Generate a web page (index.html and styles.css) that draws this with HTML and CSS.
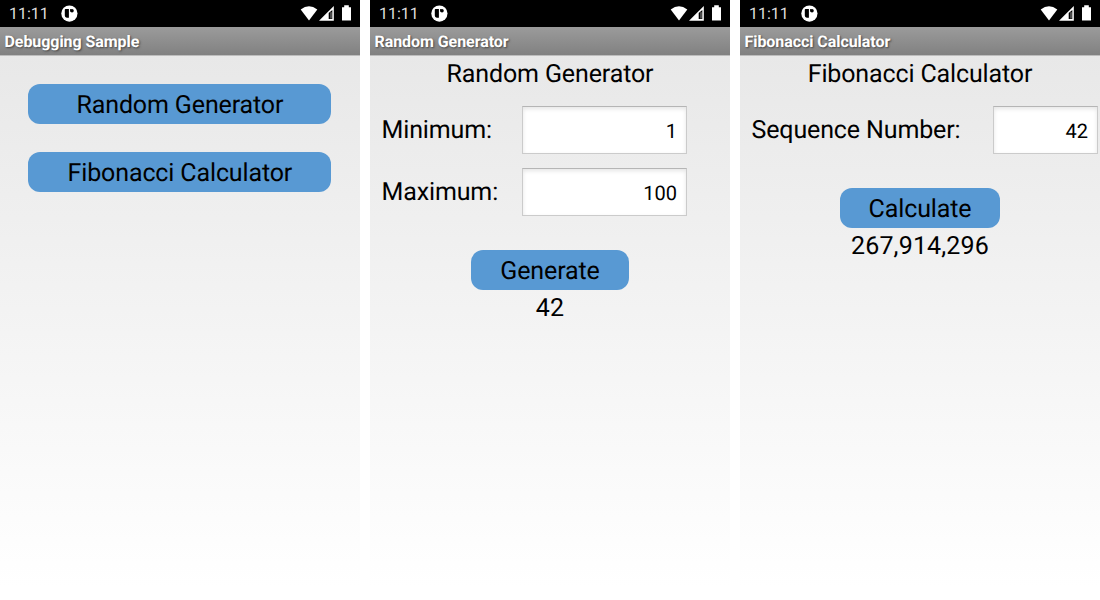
FILE: index.html
```html
<!DOCTYPE html>
<html lang="en">
<head>
<meta charset="utf-8">
<title>Debugging Sample</title>
<link rel="stylesheet" href="styles.css">
</head>
<body>
<svg class="symbols" width="0" height="0" aria-hidden="true">
  <symbol id="app" viewBox="0 0 17 17">
    <circle cx="8.4" cy="8.6" r="8.1" fill="#fff"/>
    <path d="M4.4 4h3.5v8.8H5.8a2.3 2.3 0 0 1-2-2.3V4.6z" fill="#000"/>
    <path d="M9.2 4h1v2.5h-1z" fill="#000"/>
    <circle cx="11" cy="5.7" r="1.8" fill="#000"/>
  </symbol>
  <symbol id="status" viewBox="0 0 52 18">
    <path d="M.7 4.4Q9 -1.8 17.3 4.4L9 15.5z" fill="#fff"/>
    <path d="M19 15.7 33.8 1v14.7z" fill="#fff"/>
    <path d="M28.7 8 32.3 5v9h-3.6z" fill="#000"/>
    <path d="M31 7.2v6.3" stroke="#999" fill="none"/>
    <path d="M42 2.2h2.2V.3h4.6v1.9H51v13.4h-9z" fill="#fff"/>
  </symbol>
</svg>
<main class="screens">
  <section class="phone">
    <div class="status-bar"><span class="clock">11:11</span><svg class="app-icon"><use href="#app"/></svg><svg class="status-icons"><use href="#status"/></svg></div>
    <h1 class="title-bar">Debugging Sample</h1>
    <div class="menu">
      <button class="button">Random Generator</button>
      <button class="button">Fibonacci Calculator</button>
    </div>
  </section>
  <section class="phone">
    <div class="status-bar"><span class="clock">11:11</span><svg class="app-icon"><use href="#app"/></svg><svg class="status-icons"><use href="#status"/></svg></div>
    <h1 class="title-bar">Random Generator</h1>
    <div class="content">
      <h2 class="heading">Random Generator</h2>
      <div class="fields">
        <label class="label" for="min">Minimum:</label><input class="input" id="min" value="1">
        <label class="label" for="max">Maximum:</label><input class="input" id="max" value="100">
      </div>
      <button class="button generate">Generate</button>
      <output class="result">42</output>
    </div>
  </section>
  <section class="phone">
    <div class="status-bar"><span class="clock">11:11</span><svg class="app-icon"><use href="#app"/></svg><svg class="status-icons"><use href="#status"/></svg></div>
    <h1 class="title-bar">Fibonacci Calculator</h1>
    <div class="content">
      <h2 class="heading">Fibonacci Calculator</h2>
      <div class="fields sequence">
        <label class="label" for="seq">Sequence Number:</label><input class="input" id="seq" value="42">
      </div>
      <button class="button calculate">Calculate</button>
      <output class="result">267,914,296</output>
    </div>
  </section>
</main>
</body>
</html>
```
FILE: styles.css
```css
* { box-sizing: border-box; }
body { margin: 0; background: #fff; font-family: Roboto, sans-serif; color: #000; text-rendering: geometricPrecision; }
.symbols { display: block; }
.screens { display: grid; grid-template-columns: repeat(3, 360px); gap: 10px; height: 600px; }
.phone { display: flex; flex-direction: column; height: 600px; background: linear-gradient(#e8e8e8 55px, #fff 587px); }
.status-bar { display: flex; height: 27px; flex: none; background: #000; color: #ddd; padding: 0 8px 0 9px; }
.clock { width: 52px; font-size: 16px; line-height: 28px; }
.app-icon { width: 17px; height: 17px; margin-top: 5px; }
.status-icons { width: 52px; height: 18px; margin: 5px 0 0 auto; }
.title-bar { flex: none; margin: 0; height: 29px; padding-left: 4.5px; background: linear-gradient(#9b9b9b, #818181); border-bottom: 1px solid #bdbdbd; color: #fff; font-size: 16px; font-weight: 700; line-height: 30px; letter-spacing: -.06px; text-shadow: 1px 1px 2px #444; }
.menu { display: flex; flex-direction: column; gap: 28px; padding: 28px 28.6px 0 28.4px; }
.button { height: 40px; border: 0; border-radius: 12px; background: #5899d3; color: #000; padding: 2px 0 0; font: 25px/39px Roboto, sans-serif; letter-spacing: -.13px; text-rendering: inherit; }
.content { display: flex; flex-direction: column; align-items: center; }
.heading { margin: 0; height: 50px; font-size: 25px; font-weight: 400; line-height: 37px; letter-spacing: -.13px; }
.fields { align-self: stretch; display: grid; grid-template-columns: 140px 165px; row-gap: 14px; padding-left: 12px; }
.fields.sequence { grid-template-columns: 241px 105px; }
.label { font-size: 25px; line-height: 49px; height: 48px; margin-left: -.5px; letter-spacing: -.13px; }
.input { width: 100%; height: 48px; border: 1px solid #cbcbcb; border-top-color: #b5b5b5; background: #fff; padding: 1px 9px 0; box-shadow: inset 0 2px 4px #e5e5e5; text-align: right; font: 20px Roboto, sans-serif; text-rendering: inherit; color: #000; }
.generate { width: 158px; margin-top: 34px; }
.calculate { width: 160px; margin-top: 34px; }
.result { font-size: 25px; line-height: 38px; letter-spacing: .15px; }
```
